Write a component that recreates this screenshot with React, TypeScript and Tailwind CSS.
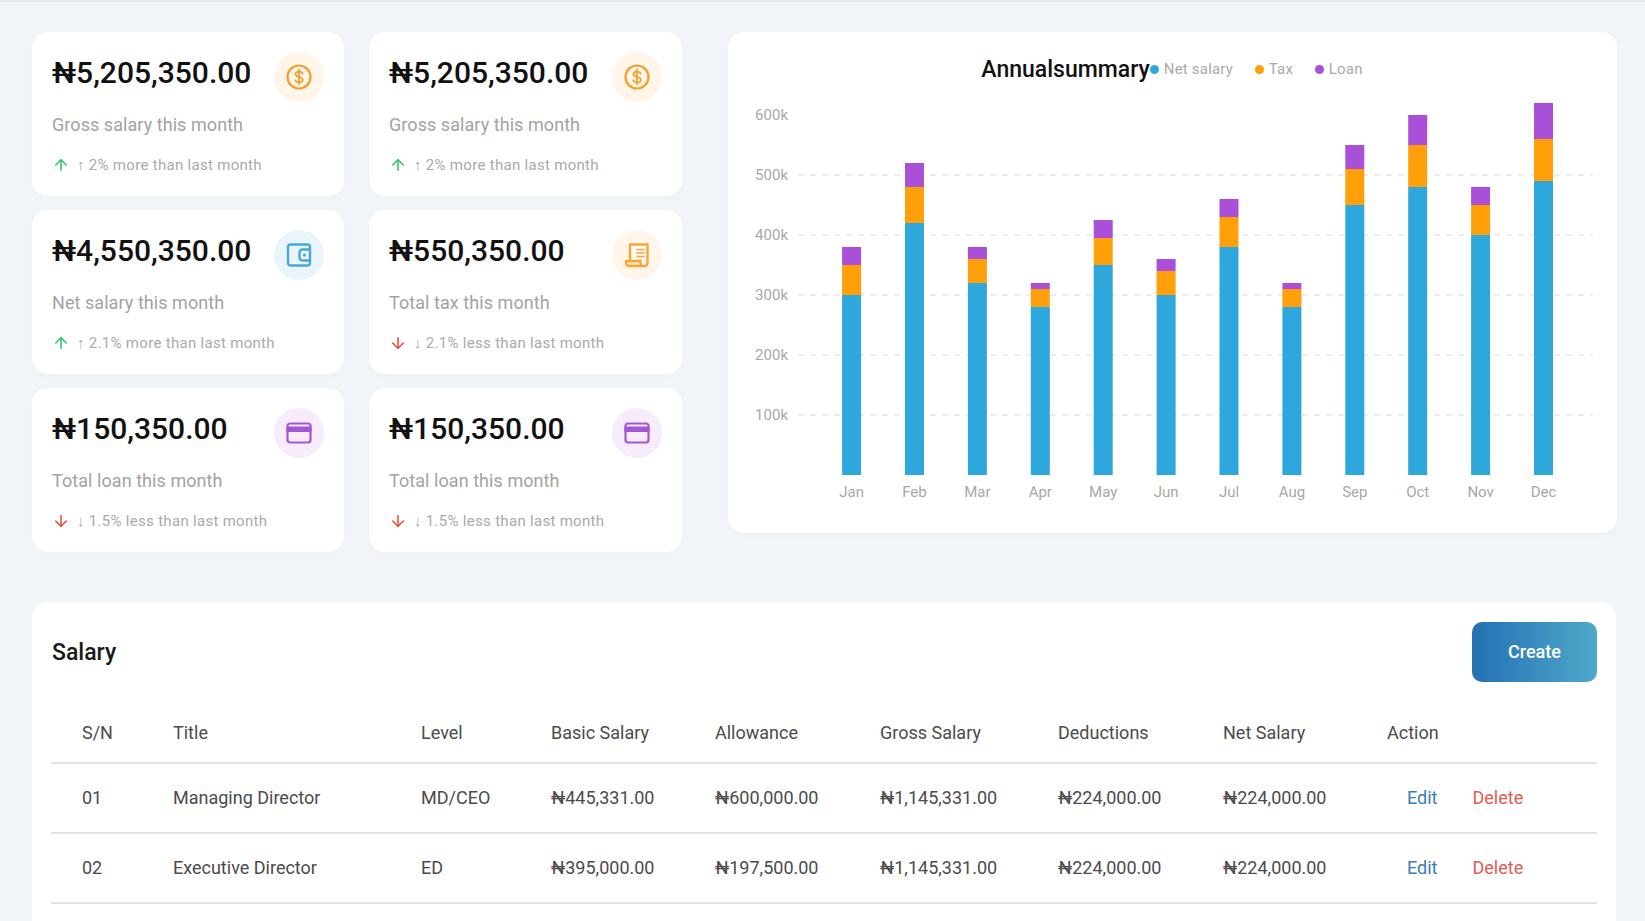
import { ArrowDown, ArrowUp } from "lucide-react";
import type { ReactNode } from "react";

type Stat = {
  value: string;
  label: string;
  delta: string;
  up: boolean;
  circle: string;
  icon: ReactNode;
};

function DollarIcon() {
  return (
    <svg width="26" height="26" viewBox="0 0 26 26" fill="none" stroke="#f0a02c" strokeWidth="2.2" strokeLinecap="round" strokeLinejoin="round">
      <circle cx="13" cy="13" r="11.5" />
      <path d="M16.6 9.6c-.5-1.3-1.9-2-3.6-2-2.1 0-3.6 1.1-3.6 2.7 0 3.6 7.4 1.8 7.4 5.4 0 1.6-1.6 2.7-3.8 2.7-1.8 0-3.2-.8-3.7-2.1M13 5.6v14.8" strokeWidth="1.7" />
    </svg>
  );
}

function WalletIcon() {
  return (
    <svg width="26" height="26" viewBox="0 0 26 26" fill="none" stroke="#46a9d8" strokeWidth="2.4" strokeLinejoin="round">
      <rect x="2" y="2.5" width="22" height="21" rx="2.5" />
      <path d="M24 7.5h-7.5a3 3 0 0 0-3 3v5a3 3 0 0 0 3 3H24" />
      <circle cx="18.5" cy="13" r="1.6" fill="#46a9d8" stroke="none" />
    </svg>
  );
}

function ReceiptIcon() {
  return (
    <svg width="26" height="26" viewBox="0 0 26 26" fill="none" stroke="#f5a63a" strokeWidth="2.4" strokeLinejoin="round" strokeLinecap="round">
      <path d="M6 18V2.5h17.5V21a3 3 0 0 1-3 3" fill="#fff9ef" />
      <path d="M2 19h14.5v2a3 3 0 0 0 3 3H5a3 3 0 0 1-3-3z" fill="#fde3b8" />
      <path d="M13 7.5h7M13 11h7M13 14.5h7" strokeWidth="1.6" />
    </svg>
  );
}

function LoanCardIcon() {
  return (
    <svg width="26" height="22" viewBox="0 0 26 22" fill="none" stroke="#a456d6" strokeWidth="2.2" strokeLinejoin="round">
      <rect x="1.5" y="1.5" width="23" height="19" rx="2.5" />
      <rect x="1.5" y="5.5" width="23" height="3.5" fill="#a456d6" />
    </svg>
  );
}

const orange = "bg-[#fff5e8]";
const blue = "bg-[#e9f5fa]";
const purple = "bg-[#f6ecfb]";

const stats: Stat[] = [
  { value: "₦5,205,350.00", label: "Gross salary this month", delta: "↑ 2% more than last month", up: true, circle: orange, icon: <DollarIcon /> },
  { value: "₦5,205,350.00", label: "Gross salary this month", delta: "↑ 2% more than last month", up: true, circle: orange, icon: <DollarIcon /> },
  { value: "₦4,550,350.00", label: "Net salary this month", delta: "↑ 2.1% more than last month", up: true, circle: blue, icon: <WalletIcon /> },
  { value: "₦550,350.00", label: "Total tax this month", delta: "↓ 2.1% less than last month", up: false, circle: orange, icon: <ReceiptIcon /> },
  { value: "₦150,350.00", label: "Total loan this month", delta: "↓ 1.5% less than last month", up: false, circle: purple, icon: <LoanCardIcon /> },
  { value: "₦150,350.00", label: "Total loan this month", delta: "↓ 1.5% less than last month", up: false, circle: purple, icon: <LoanCardIcon /> },
];

// cumulative tops of each stack, in thousands
const months: [string, number, number, number][] = [
  ["Jan", 300, 350, 380],
  ["Feb", 420, 480, 520],
  ["Mar", 320, 360, 380],
  ["Apr", 280, 310, 320],
  ["May", 350, 395, 425],
  ["Jun", 300, 340, 360],
  ["Jul", 380, 430, 460],
  ["Aug", 280, 310, 320],
  ["Sep", 450, 510, 550],
  ["Oct", 480, 550, 600],
  ["Nov", 400, 450, 480],
  ["Dec", 490, 560, 620],
];

const rows = [
  ["01", "Managing Director", "MD/CEO", "₦445,331.00", "₦600,000.00", "₦1,145,331.00", "₦224,000.00", "₦224,000.00"],
  ["02", "Executive Director", "ED", "₦395,000.00", "₦197,500.00", "₦1,145,331.00", "₦224,000.00", "₦224,000.00"],
];

const headers = ["S/N", "Title", "Level", "Basic Salary", "Allowance", "Gross Salary", "Deductions", "Net Salary", "Action"];
const colWidths = ["w-[91px]", "w-[248px]", "w-[130px]", "w-[164px]", "w-[165px]", "w-[178px]", "w-[165px]", "w-[164px]", "w-[241px]"];

function StatCard({ stat }: { stat: Stat }) {
  return (
    <div className="h-[164px] rounded-2xl bg-white px-5 pt-5 shadow-[0_2px_10px_rgba(15,23,42,0.02)]">
      <div className="flex h-[50px] items-start justify-between">
        <p className="text-[30px] leading-[42px] font-medium text-[#111]">{stat.value}</p>
        <div className={`flex h-[50px] w-[50px] items-center justify-center rounded-full ${stat.circle}`}>{stat.icon}</div>
      </div>
      <p className="mt-[11px] text-[18px] leading-6 tracking-[0.06px] text-[#a3a3a3]">{stat.label}</p>
      <div className="mt-[18px] flex h-5 items-center gap-[7px] text-[15px] tracking-[0.3px] text-[#aaaaaa]">
        {stat.up ? (
          <ArrowUp size={18} strokeWidth={2} className="text-[#2cc55f]" />
        ) : (
          <ArrowDown size={18} strokeWidth={2} className="text-[#e5483b]" />
        )}
        <span>{stat.delta}</span>
      </div>
    </div>
  );
}

function LegendItem({ color, label, width }: { color: string; label: string; width?: string }) {
  return (
    <div className={`flex items-center gap-[5px] ${width ?? ""}`}>
      <span className={`h-[9px] w-[9px] shrink-0 rounded-full ${color}`} />
      <span className="text-[15px] tracking-[0.2px] text-[#aaaaaa]">{label}</span>
    </div>
  );
}

function BarChart() {
  const y = (v: number) => 391 - v * 0.6;
  const ticks = [600, 500, 400, 300, 200, 100];
  return (
    <svg width="889" height="449" viewBox="0 0 889 449" className="block" fontFamily="Roboto, sans-serif">
      {ticks.map((t) => (
        <g key={t}>
          <text x="60" y={y(t) + 5} textAnchor="end" fontSize="15" fill="#a8a8a8">
            {t}k
          </text>
          {t !== 600 && <line x1="70" x2="865" y1={y(t)} y2={y(t)} stroke="#e8e8e8" strokeWidth="1.5" strokeDasharray="6 6" />}
        </g>
      ))}
      {months.map(([name, net, tax, loan], i) => {
        const cx = 123.6 + i * 62.9;
        return (
          <g key={name}>
            <rect x={cx - 9.5} y={y(net)} width="19" height={y(0) - y(net)} fill="#2ea8dc" />
            <rect x={cx - 9.5} y={y(tax)} width="19" height={y(net) - y(tax)} fill="#ff9f0a" />
            <rect x={cx - 9.5} y={y(loan)} width="19" height={y(tax) - y(loan)} fill="#a94fd8" />
            <text x={cx} y="413" textAnchor="middle" fontSize="15" fill="#a8a8a8">
              {name}
            </text>
          </g>
        );
      })}
    </svg>
  );
}

export default function App() {
  return (
    <div className="h-[921px] overflow-hidden border-t-2 border-[#e4e9ee] bg-[#f1f5f9] font-['Roboto',sans-serif]">
      <div className="flex items-start pt-[30px] pl-8">
        <div className="grid w-[650px] grid-cols-[312px_313px] gap-x-[25px] gap-y-[14px]">
          {stats.map((stat, i) => (
            <StatCard key={i} stat={stat} />
          ))}
        </div>

        <section className="ml-[46px] h-[501px] w-[889px] rounded-2xl bg-white pt-[22px] shadow-[0_2px_10px_rgba(15,23,42,0.02)]">
          <div className="flex h-[30px] items-center justify-center">
            <h2 className="mt-[2px] -ml-px text-[23px] font-medium text-[#111]">Annualsummary</h2>
            <div className="flex items-center">
              <LegendItem color="bg-[#2ea8dc]" label="Net salary" width="w-[105px]" />
              <LegendItem color="bg-[#ff9f0a]" label="Tax" width="w-[60px]" />
              <LegendItem color="bg-[#a94fd8]" label="Loan" />
            </div>
          </div>
          <BarChart />
        </section>
      </div>

      <section className="mt-[50px] ml-8 w-[1584px] rounded-t-2xl bg-white px-[19px] pt-5 pb-10">
        <div className="flex items-center justify-between">
          <h2 className="mt-[2px] ml-px text-[23px] font-medium text-[#1a1a1a]">Salary</h2>
          <button className="h-[60px] w-[125px] rounded-[10px] bg-gradient-to-r from-[#2470b3] to-[#4fa9ca] pb-px text-[18px] font-medium text-white">
            Create
          </button>
        </div>

        <table className="mt-[19px] w-[1546px] table-fixed border-collapse">
          <colgroup>
            {colWidths.map((w, i) => (
              <col key={i} className={w} />
            ))}
          </colgroup>
          <thead>
            <tr className="border-b-2 border-[#e2e2e2]">
              {headers.map((h) => (
                <th key={h} className="h-[62px] pt-[2px] pl-[31px] text-left text-[18px] font-normal whitespace-nowrap text-[#4b4b4b]">
                  {h}
                </th>
              ))}
            </tr>
          </thead>
          <tbody>
            {rows.map((row) => (
              <tr key={row[0]} className="border-b-2 border-[#e2e2e2]">
                {row.map((cell, i) => (
                  <td key={i} className="h-[70px] pb-[2px] pl-[31px] text-[18px] whitespace-nowrap text-[#4b4b4b]">
                    {cell}
                  </td>
                ))}
                <td className="h-[70px] pb-[2px] pl-[51px] text-[18px]">
                  <a className="text-[#3b7db8]">Edit</a>
                  <a className="ml-[35px] text-[#e05a52]">Delete</a>
                </td>
              </tr>
            ))}
          </tbody>
        </table>
      </section>
    </div>
  );
}
